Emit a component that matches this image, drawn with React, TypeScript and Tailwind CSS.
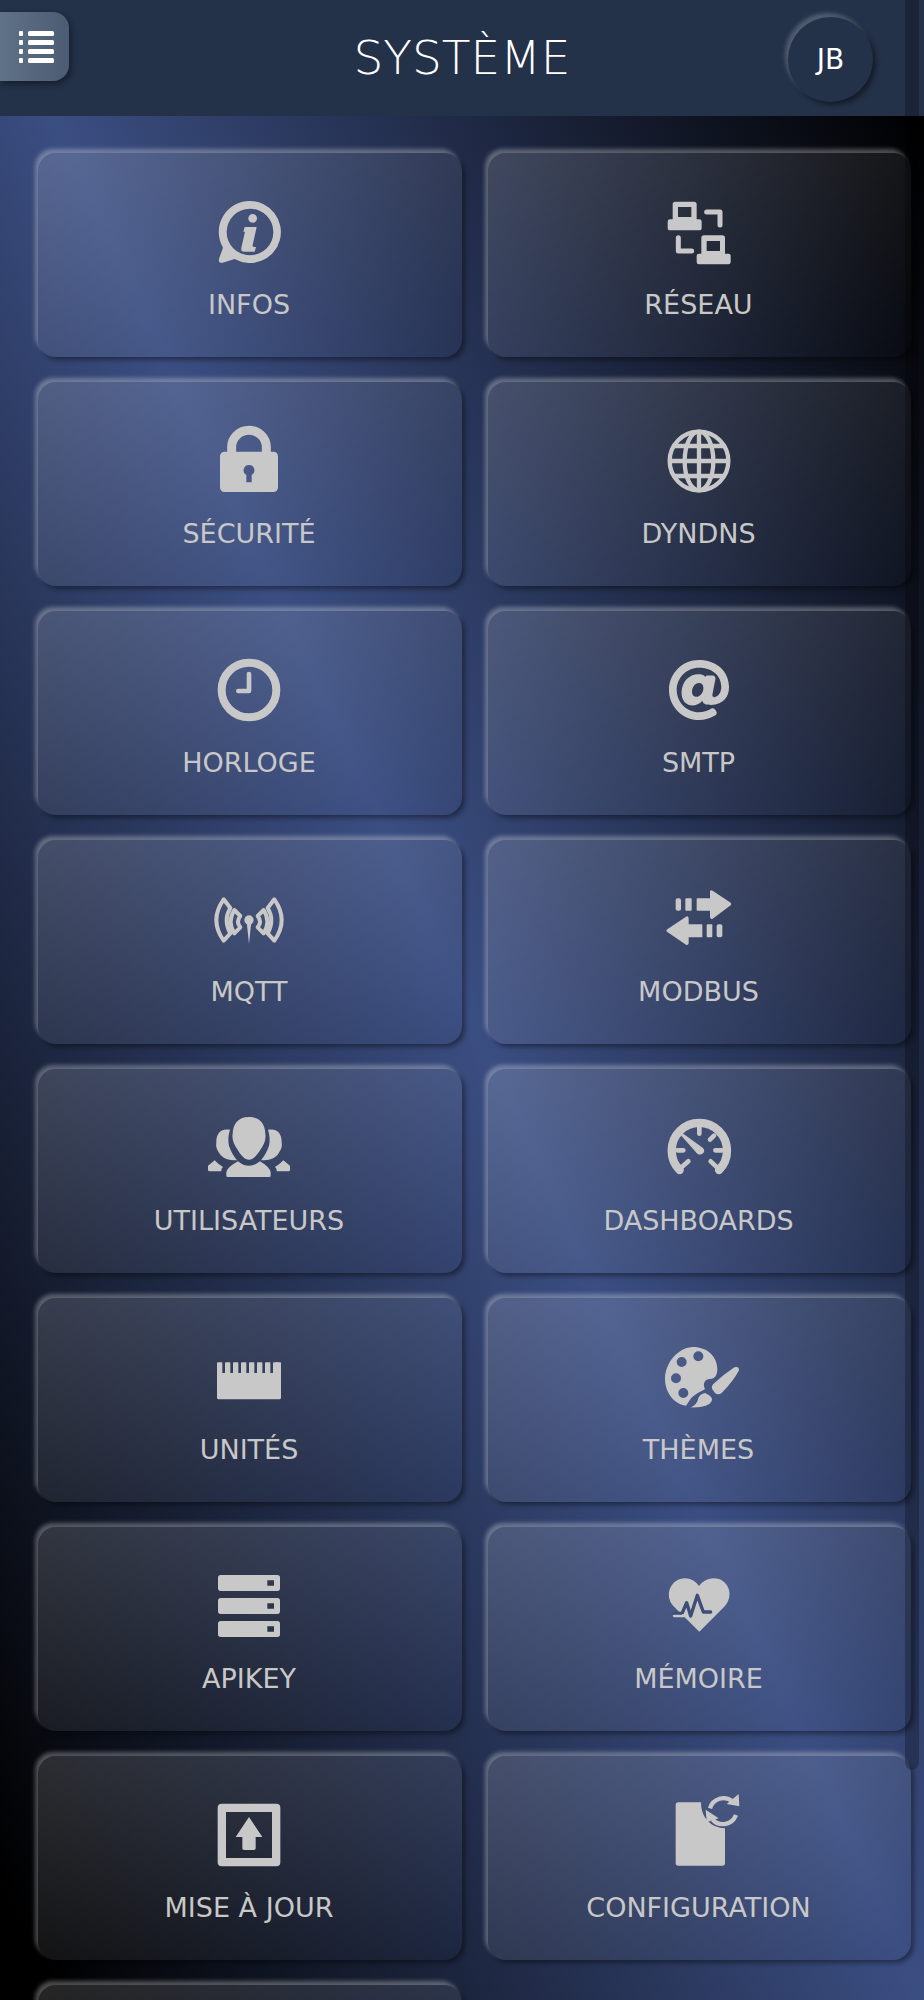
import { FaAt } from 'react-icons/fa';

const ICON = '#c8c8c8';

function MenuIcon() {
  return (
    <svg width="36" height="32" viewBox="0 0 36 32" fill="#fff">
      {[0, 9, 18, 27].map((y) => (
        <g key={y}>
          <rect x="0" y={y} width="4" height="5" rx="1" />
          <rect x="9" y={y} width="26" height="5" rx="1.5" />
        </g>
      ))}
    </svg>
  );
}

// icons are drawn in a 300 unit box, 1px = 3 units
function IconBox({ view, children }: { view?: string; children: React.ReactNode }) {
  return (
    <svg width="100" height="100" viewBox={view ?? '0 0 300 300'} fill={ICON} className="overflow-visible">
      {children}
    </svg>
  );
}

const icons: Record<string, React.ReactNode> = {
  info: (
    <IconBox view="25 3 300 300">
      <path
        fillRule="evenodd"
        d="M178 60A93 93 0 1 1 132 234L96 245Q82 247 85 233L97 200A93 93 0 0 1 178 60ZM178 83a70 70 0 1 0 0 140a70 70 0 1 0 0 -140Z"
      />
      <circle cx="186" cy="112" r="13" />
      <path d="M162 138H198L186 192Q184 198 192 198H196L192 212H160Q150 212 152 200L163 152H158Z" />
    </IconBox>
  ),
  network: (
    <IconBox view="27 3 300 300">
      <path
        fillRule="evenodd"
        d="M106 62H162Q170 62 170 70V115H178Q185 115 185 122V140Q185 148 178 148H90Q83 148 83 140V122Q83 115 90 115H98V70Q98 62 106 62ZM114 78V108H154V78Z"
      />
      <path
        fillRule="evenodd"
        d="M192 163H247Q255 163 255 171V218H265Q272 218 272 225V243Q272 250 265 250H177Q170 250 170 243V225Q170 218 177 218H184V171Q184 163 192 163ZM200 180V210H240V180Z"
      />
      <path d="M200 93H240V132M115 170V210H155" fill="none" stroke={ICON} strokeWidth="15" strokeLinecap="round" strokeLinejoin="round" />
    </IconBox>
  ),
  lock: (
    <IconBox>
      <path
        fillRule="evenodd"
        d="M78 122H222Q237 122 237 137V228Q237 243 222 243H78Q63 243 63 228V137Q63 122 78 122ZM150 162a16 16 0 0 0 -8 30V214H158V192a16 16 0 0 0 -8 -30Z"
      />
      <path d="M98 130V108A52 50 0 0 1 202 108V130" fill="none" stroke={ICON} strokeWidth="27" />
    </IconBox>
  ),
  globe: (
    <IconBox>
      <g fill="none" stroke={ICON} strokeWidth="13">
        <circle cx="150" cy="150" r="88" />
        <ellipse cx="150" cy="150" rx="43" ry="88" />
        <path d="M150 62V238M62 150H238M76 105H224M76 195H224" />
      </g>
    </IconBox>
  ),
  clock: (
    <IconBox>
      <circle cx="150" cy="150" r="82" fill="none" stroke={ICON} strokeWidth="24" />
      <path d="M150 102V153H118" fill="none" stroke={ICON} strokeWidth="14" strokeLinecap="round" strokeLinejoin="round" />
    </IconBox>
  ),
  at: (
    <div className="w-[100px] h-[100px] flex items-center justify-center">
      <FaAt size={62} color={ICON} />
    </div>
  ),
  mqtt: (
    <IconBox view="28 -33 300 300">
      <circle cx="178" cy="120" r="14" />
      <path d="M171 125L178 192L185 125Z" />
      {[undefined, 'translate(356 0) scale(-1 1)'].map((t, i) => (
        <g key={i} transform={t} fill="none" stroke={ICON} strokeWidth="12" strokeLinejoin="round">
          <path d="M102 58Q58 120 102 182L122 160Q100 120 122 84Z" />
          <path d="M134 90L152 108Q138 125 152 142L134 160Q112 125 134 90Z" />
        </g>
      ))}
    </IconBox>
  ),
  modbus: (
    <IconBox view="27 -33 300 300">
      <rect x="107" y="55" width="16" height="37" rx="6" />
      <rect x="136" y="55" width="19" height="37" rx="3" />
      <path d="M172 55H210V34Q212 28 218 32L272 68Q276 72 272 76L218 116Q212 120 210 112V92H172Q170 92 170 90V57Q170 55 172 55Z" />
      <rect x="200" y="133" width="17" height="39" rx="3" />
      <rect x="230" y="133" width="17" height="39" rx="6" />
      <path d="M185 133H146V114Q144 106 138 110L82 148Q76 152 82 156L138 194Q144 198 146 190V172H185Q187 172 187 170V135Q187 133 185 133Z" />
    </IconBox>
  ),
  users: (
    <IconBox view="33 -35 300 300">
      <path d="M183 22C218 22 231 45 232 72C235 88 228 105 219 117C208 136 195 150 183 150C170 150 158 136 147 117C138 105 131 88 134 72C135 45 148 22 183 22Z" />
      <path d="M115 188Q118 172 150 155Q183 182 216 155Q245 172 248 188V198Q248 202 244 202H119Q115 202 115 198Z" />
      {[undefined, 'translate(366 0) scale(-1 1)'].map((t, i) => (
        <g key={i} transform={t}>
          <path d="M126 60C95 55 84 75 85 100C82 112 90 125 95 132C103 145 120 152 147 152C138 140 128 125 123 108Q118 85 126 60Z" />
          <path d="M60 168L80 152Q92 165 105 172Q98 178 100 185H64Q60 185 60 180Z" />
        </g>
      ))}
    </IconBox>
  ),
  dash: (
    <IconBox view="27 -35 300 300">
      <path d="M119 181A83 83 0 1 1 237 181" fill="none" stroke={ICON} strokeWidth="25" strokeLinecap="round" />
      <path d="M178 50V72M112 122H130M226 122H246M222 78L210 90M128 170L145 155M228 170L212 155" stroke={ICON} strokeWidth="14" strokeLinecap="round" />
      <path d="M122 76Q126 70 132 74L188 114Q196 122 190 130Q182 138 172 132Z" />
    </IconBox>
  ),
  ruler: (
    <IconBox>
      <rect x="54" y="138" width="192" height="79" rx="5" />
      {[54, 78, 102, 126, 150, 174, 198, 222].map((x) => (
        <rect key={x} x={x} y="106" width="16" height="40" rx="2" />
      ))}
      <rect x="230" y="106" width="16" height="40" rx="2" />
    </IconBox>
  ),
  palette: (
    <IconBox view="27 -38 300 300">
      <path
        fillRule="evenodd"
        d="M160 22C115 22 75 70 75 118C75 160 105 195 138 198L150 180C160 165 185 155 195 148C188 135 192 118 210 118C225 118 232 105 232 88C232 50 200 22 160 22ZM175 35a15 15 0 1 0 0 30a15 15 0 1 0 0 -30ZM125 52a15 15 0 1 0 0 30a15 15 0 1 0 0 -30ZM108 101a15 15 0 1 0 0 30a15 15 0 1 0 0 -30ZM130 145a15 15 0 1 0 0 30a15 15 0 1 0 0 -30Z"
      />
      <path d="M283 83Q297 78 297 92Q280 125 245 160Q235 168 225 160L218 150Q212 142 220 133Q250 105 283 83Z" />
      <path d="M195 160Q222 172 215 185Q205 205 152 203Q172 195 175 175Q180 163 195 160Z" />
    </IconBox>
  ),
  server: (
    <IconBox>
      {[57, 126, 195].map((y) => (
        <path
          key={y}
          fillRule="evenodd"
          d={`M65 ${y}H235Q243 ${y} 243 ${y + 8}V${y + 40}Q243 ${y + 48} 235 ${y + 48}H65Q57 ${y + 48} 57 ${y + 40}V${y + 8}Q57 ${y} 65 ${y}ZM205 ${y + 16}V${y + 32}H225V${y + 16}Z`}
        />
      ))}
    </IconBox>
  ),
  heart: (
    <IconBox view="27 -40 300 300">
      <path d="M178 187L100 110C70 75 95 27 135 27C155 27 170 40 177 50C185 40 200 27 222 27C262 27 285 75 255 110Z" />
      <path d="M128 128L140 100L152 140L172 78L190 128H212" fill="none" stroke="#3d4d76" strokeWidth="10" strokeLinejoin="round" strokeLinecap="round" />
      <path d="M102 140H136" stroke={ICON} strokeWidth="7" strokeLinecap="round" />
      <path d="M102 131H128" stroke="#3d4d76" strokeWidth="8" strokeLinecap="round" />
    </IconBox>
  ),
  upload: (
    <IconBox>
      <path
        fillRule="evenodd"
        d="M68 56H232Q244 56 244 68V232Q244 244 232 244H68Q56 244 56 232V68Q56 56 68 56ZM81 81V219H219V81Z"
      />
      <path d="M150 96L190 156H170V190Q170 195 165 195H135Q130 195 130 190V156H110Z" />
    </IconBox>
  ),
  config: (
    <IconBox view="27 -12 300 300">
      <path d="M115 40H183C183 80 205 115 255 118V222Q255 230 247 230H115Q107 230 107 222V48Q107 40 115 40Z" />
      <path d="M210 58A42 42 0 0 1 278 38M288 78A42 42 0 0 1 218 92" fill="none" stroke={ICON} strokeWidth="13" />
      <path d="M296 15L298 52L260 45ZM197 62L200 100L236 88Z" />
    </IconBox>
  ),
};

const items = [
  { label: 'INFOS', icon: 'info' },
  { label: 'RÉSEAU', icon: 'network' },
  { label: 'SÉCURITÉ', icon: 'lock' },
  { label: 'DYNDNS', icon: 'globe' },
  { label: 'HORLOGE', icon: 'clock' },
  { label: 'SMTP', icon: 'at' },
  { label: 'MQTT', icon: 'mqtt' },
  { label: 'MODBUS', icon: 'modbus' },
  { label: 'UTILISATEURS', icon: 'users' },
  { label: 'DASHBOARDS', icon: 'dash' },
  { label: 'UNITÉS', icon: 'ruler' },
  { label: 'THÈMES', icon: 'palette' },
  { label: 'APIKEY', icon: 'server' },
  { label: 'MÉMOIRE', icon: 'heart' },
  { label: 'MISE À JOUR', icon: 'upload' },
  { label: 'CONFIGURATION', icon: 'config' },
  { label: '', icon: '' },
];

export default function App() {
  return (
    <div className="relative h-screen overflow-hidden bg-[linear-gradient(to_top_right,#000_3%,#3b4e82_50%,#000_97%)] font-['DejaVu_Sans',sans-serif]">
      <header className="relative z-10 grid grid-cols-[1fr_auto_1fr] h-[116px] bg-[#233149]">
        <div>
          <button className="mt-3 w-[69px] h-[69px] flex items-center justify-center rounded-r-2xl bg-gradient-to-r from-[#5f7288] to-[#4c5c72] shadow-[2px_3px_6px_rgba(0,0,0,0.4)] pl-1">
            <MenuIcon />
          </button>
        </div>
        <h1 className="mt-[28px] h-[60px] text-[47px] leading-[60px] font-extralight text-white">SYSTÈME</h1>
        <div className="flex justify-end pr-[51px]">
          <div className="mt-[17px] w-[85px] h-[85px] rounded-full bg-[#233149] flex items-center justify-center text-white text-[28px] shadow-[3px_3px_5px_rgba(0,0,0,0.45),-3px_-4px_4px_rgba(255,255,255,0.22)]">
            JB
          </div>
        </div>
      </header>

      <main className="grid grid-cols-[424px_423px] gap-x-[26px] gap-y-[25px] pt-[37px] pl-[38px]">
        {items.map((item, i) => (
          <div
            key={i}
            className="h-[204px] rounded-[18px] flex flex-col items-center pt-[29px] pr-[2px] bg-gradient-to-br from-white/15 to-white/0 shadow-[-3px_-4px_4px_rgba(255,255,255,0.3),3px_3px_5px_rgba(0,0,0,0.4)]"
          >
            {icons[item.icon]}
            <span className="mt-[7px] text-[27px] leading-[32px] text-[#c8c8c8]">{item.label}</span>
          </div>
        ))}
      </main>

      {/* scrollbar thumb */}
      <div className="absolute z-20 top-0 right-[5px] w-[14px] h-[1770px] rounded-b-lg bg-black/25" />
    </div>
  );
}
